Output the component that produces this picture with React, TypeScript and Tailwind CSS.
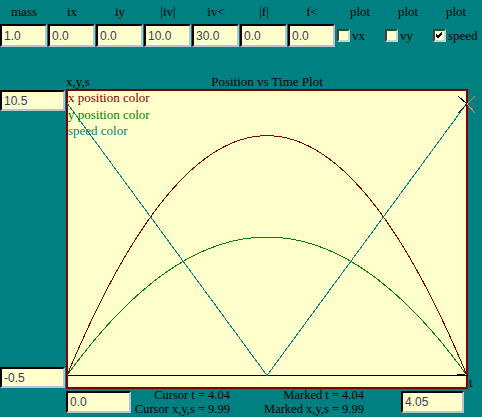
import React from 'react';

const T = 4.04;
const X = (t: number) => 1 + (t / T) * 400;
const Y = (v: number) => 286.5 - v * 27.25;

const curve = (f: (t: number) => number) => {
  const pts: string[] = [];
  for (let i = 0; i <= 200; i++) {
    const t = (T * i) / 200;
    pts.push(`${X(t).toFixed(1)},${Y(f(t)).toFixed(1)}`);
  }
  return pts.join(' ');
};

const xPos = (t: number) => 8.8 * 4 * (t / T) * (1 - t / T);
const yPos = (t: number) => 5.08 * 4 * (t / T) * (1 - t / T);
const speed = (t: number) => 10 * Math.abs(1 - (2 * t) / T);

const Field = ({ value, className = '' }: { value: string; className?: string }) => (
  <input
    readOnly
    value={value}
    className={`bg-[#ffffcc] border-2 border-t-black border-l-black border-r-[#b8c4d0] border-b-[#b8c4d0] pl-[2px] text-[12px] text-[#3a3a5c] font-['Liberation_Sans',sans-serif] outline-none ${className}`}
  />
);

const Check = ({ label, checked = false }: { label: string; checked?: boolean }) => (
  <div className="flex items-center gap-[2px] pl-[1px]">
    <div className="w-[13px] h-[13px] bg-[#ffffcc] border-2 border-t-[#404040] border-l-[#404040] border-r-[#c8d0d8] border-b-[#c8d0d8] flex items-center justify-center">
      {checked && (
        <svg width="9" height="9" viewBox="0 0 9 9" shapeRendering="crispEdges">
          <path d="M1 4 L3 6 L7 2 M1 5 L3 7 L7 3 M1 3 L3 5 L7 1" stroke="black" strokeWidth="1" fill="none" />
        </svg>
      )}
    </div>
    <span className="text-[13px] text-black">{label}</span>
  </div>
);

export default function App() {
  const labels = ['mass', 'ix', 'iy', '|iv|', 'iv<', '|f|', 'f<', 'plot', 'plot', 'plot'];
  const values = ['1.0', '0.0', '0.0', '10.0', '30.0', '0.0', '0.0'];

  return (
    <div className="w-[482px] h-[417px] bg-[#008080] overflow-hidden font-['Liberation_Serif',serif] text-black">
      <div className="grid grid-cols-[repeat(10,48px)]">
        {labels.map((l, i) => (
          <div key={i} className="h-[24px] flex items-center justify-center text-[13px]">
            {l}
          </div>
        ))}
        {values.map((v, i) => (
          <Field key={i} value={v} className="w-[47px] h-[23px]" />
        ))}
        <Check label="vx" />
        <Check label="vy" />
        <Check label="speed" checked />
      </div>

      <div className="ml-[66px] mt-[27px] w-[402px] h-[15px] grid grid-cols-[1fr_auto_1fr] text-[13px] leading-[15px]">
        <span>x,y,s</span>
        <span>Position vs Time Plot</span>
        <span />
      </div>

      <div className="flex h-[300px]">
        <div className="w-[66px] flex flex-col justify-between py-[1px]">
          <Field value="10.5" className="w-[65px] h-[21px]" />
          <Field value="-0.5" className="w-[65px] h-[21px]" />
        </div>
        <div className="relative w-[402px] h-[300px] bg-[#ffffcc] border-2 border-[#800000]">
          <svg
            className="absolute -left-[2px] -top-[2px] overflow-visible"
            width="402"
            height="300"
            shapeRendering="crispEdges"
          >
            <line x1="0" y1="286.5" x2="402" y2="286.5" stroke="black" strokeWidth="1" />
            <polyline points={curve(xPos)} fill="none" stroke="#800000" strokeWidth="1" />
            <polyline points={curve(yPos)} fill="none" stroke="#008000" strokeWidth="1" />
            <polyline points={curve(speed)} fill="none" stroke="#008080" strokeWidth="1" />
            <path d="M392 7 L401 15 M392 24 L401 15" stroke="black" strokeWidth="1" />
            <path d="M401 15 L409 7 M401 15 L409 24" stroke="#ff8040" strokeWidth="1" />
            <path d="M391 285 L396 285 L401 287" stroke="black" strokeWidth="1" fill="none" />
          </svg>
          <div className="relative flex flex-col text-[13px] leading-[16.5px] -mt-[1px]">
            <span className="text-[#800000]">x position color</span>
            <span className="text-[#008000]">y position color</span>
            <span className="text-[#008080]">speed color</span>
          </div>
        </div>
        <div className="flex items-end pl-[1px] text-[13px] leading-[13px]">t</div>
      </div>

      <div className="flex">
        <Field value="0.0" className="ml-[66px] mt-[2px] w-[65px] h-[22px]" />
        <div className="w-[99px] text-right text-[12.5px] leading-[13.5px]">
          <div>Cursor t = 4.04</div>
          <div>Cursor x,y,s = 9.99</div>
        </div>
        <div className="w-[134px] text-right text-[12.5px] leading-[13.5px]">
          <div>Marked t = 4.04</div>
          <div>Marked x,y,s = 9.99</div>
        </div>
        <Field value="4.05" className="ml-[37px] mt-[2px] w-[63px] h-[22px]" />
      </div>
    </div>
  );
}
